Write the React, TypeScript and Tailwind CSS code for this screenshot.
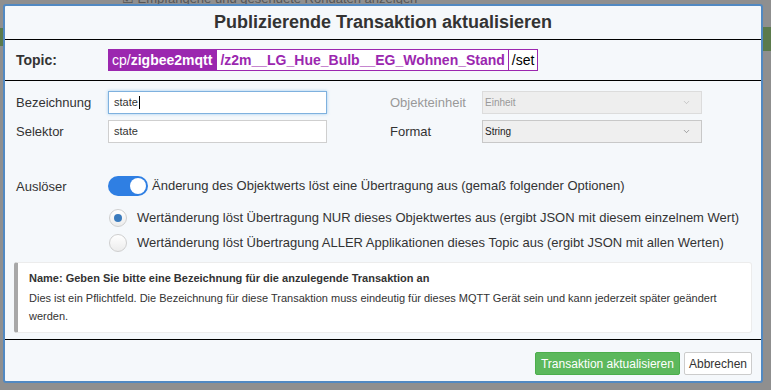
import { ChevronDown } from "lucide-react";

const PURPLE = "#9b27af";

function TextInput({ value, focused = false }: { value: string; focused?: boolean }) {
  return (
    <div
      className={`flex h-[23px] w-[219px] items-center border bg-white px-[5px] text-[11px] text-[#333] ${
        focused
          ? "border-[#7fb1de] shadow-[0_0_3px_rgba(102,175,233,0.6)]"
          : "border-[#cfcfcf]"
      }`}
    >
      {value}
      {focused && <span className="ml-px inline-block h-[13px] w-px bg-black" />}
    </div>
  );
}

function SelectBox({ value, disabled = false }: { value: string; disabled?: boolean }) {
  return (
    <div
      className={`flex h-[23px] w-[220px] items-center justify-between border pl-[2px] pr-[10px] text-[10px] ${
        disabled
          ? "border-[#dcdcdc] bg-[#eeeeee] text-[#999]"
          : "border-[#c8c8c8] bg-[#efefef] text-[#222]"
      }`}
    >
      <span>{value}</span>
      <ChevronDown size={9} strokeWidth={1.5} className={disabled ? "text-[#aaa]" : "text-[#666]"} />
    </div>
  );
}

function Radio({ checked, label }: { checked?: boolean; label: string }) {
  return (
    <div className="flex h-[25px] items-center gap-[10px]">
      <div className="flex h-[18px] w-[18px] items-center justify-center rounded-full border border-[#cfcfcf] bg-gradient-to-b from-white to-[#ececec]">
        {checked && <div className="h-[8px] w-[8px] rounded-full bg-[#3b7bbd]" />}
      </div>
      <span className="text-[13px] text-[#333]">{label}</span>
    </div>
  );
}

export default function App() {
  return (
    <div className="relative h-[390px] w-[771px] overflow-hidden bg-[#8f8f8f] pl-[3px] pt-[4px] font-['Liberation_Sans',Arial,sans-serif]">
      {/* page behind the overlay */}
      <div className="absolute left-[122px] top-[-8px] text-[13px] leading-[14px] text-[#555]">☑ Empfangene und gesendete Rohdaten anzeigen</div>
      <div className="absolute right-0 top-[27px] h-[24px] w-[8px] bg-[#5b7a4c]" />
      <div className="absolute left-0 top-[28px] h-[18px] w-[3px] bg-[#5b7a4c]" />

      {/* Dialog */}
      <div className="relative flex h-[379px] w-[760px] flex-col rounded-[3px] border-2 border-[#5189c2] bg-[#f5f8fb]">
        {/* Header */}
        <div className="flex h-[34px] items-center justify-center border-b border-black">
          <h1 className="text-[18px] font-bold text-[#333]">Publizierende Transaktion aktualisieren</h1>
        </div>

        {/* Topic */}
        <div className="flex h-[41px] items-center border-b border-black pl-[11px]">
          <span className="w-[92px] text-[14px] font-bold text-[#333]">Topic:</span>
          <div className="flex h-[22px] items-stretch text-[14px]">
            <span className="flex items-center px-[4px] text-white" style={{ backgroundColor: PURPLE }}>
              cp/<b>zigbee2mqtt</b>
            </span>
            <span
              className="flex items-center border bg-white px-[3px] font-bold"
              style={{ borderColor: PURPLE, color: PURPLE }}
            >
              /z2m__LG_Hue_Bulb__EG_Wohnen_Stand
            </span>
            <span
              className="flex items-center border border-l-0 bg-white px-[3px] text-black"
              style={{ borderColor: PURPLE }}
            >
              /set
            </span>
          </div>
        </div>

        {/* Form */}
        <div className="flex flex-col gap-[6px] pl-[11px] pt-[10px]">
          <div className="flex items-center">
            <span className="w-[92px] text-[13px] text-[#333]">Bezeichnung</span>
            <TextInput value="state" focused />
            <span className="ml-[63px] w-[92px] text-[13px] text-[#999]">Objekteinheit</span>
            <SelectBox value="Einheit" disabled />
          </div>
          <div className="flex items-center">
            <span className="w-[92px] text-[13px] text-[#333]">Selektor</span>
            <TextInput value="state" />
            <span className="ml-[63px] w-[92px] text-[13px] text-[#333]">Format</span>
            <SelectBox value="String" />
          </div>
        </div>

        {/* Trigger */}
        <div className="flex pl-[11px] pt-[33px]">
          <span className="w-[92px] pt-[1px] text-[13px] text-[#333]">Auslöser</span>
          <div className="flex flex-col">
            <div className="flex items-center gap-[4px]">
              <div className="flex h-[20px] w-[40px] items-center justify-end rounded-full bg-[#2f7fe3] pr-[2px]">
                <div className="h-[16px] w-[16px] rounded-full bg-white" />
              </div>
              <span className="text-[13px] text-[#333]">
                Änderung des Objektwerts löst eine Übertragung aus (gemaß folgender Optionen)
              </span>
            </div>
            <div className="flex flex-col pl-[1px] pt-[9px]">
              <Radio
                checked
                label="Wertänderung löst Übertragung NUR dieses Objektwertes aus (ergibt JSON mit diesem einzelnem Wert)"
              />
              <Radio label="Wertänderung löst Übertragung ALLER Applikationen dieses Topic aus (ergibt JSON mit allen Werten)" />
            </div>
          </div>
        </div>

        {/* Info */}
        <div className="mx-[9px] mt-[7px] rounded-[3px] border border-l-4 border-[#ececec] border-l-[#a8a8a8] bg-white pb-[7px] pl-[11px] pr-[8px] pt-[7px] text-[11px] text-[#333]">
          <p className="font-bold leading-[16px]">
            Name: Geben Sie bitte eine Bezeichnung für die anzulegende Transaktion an
          </p>
          <p className="mt-[3px] leading-[18px]">
            Dies ist ein Pflichtfeld. Die Bezeichnung für diese Transaktion muss eindeutig für dieses MQTT Gerät sein und kann
            jederzeit später geändert werden.
          </p>
        </div>

        {/* Footer */}
        <div className="mt-[6px] flex flex-1 items-start justify-end gap-[4px] border-t border-black pr-[9px] pt-[12px]">
          <button className="h-[23px] rounded-[2px] border border-[#4cae4c] bg-[#5cb85c] px-[5px] text-[12px] text-white">
            Transaktion aktualisieren
          </button>
          <button className="h-[23px] rounded-[2px] border border-[#cccccc] bg-white px-[4px] text-[12px] text-[#333]">
            Abbrechen
          </button>
        </div>
      </div>
    </div>
  );
}
